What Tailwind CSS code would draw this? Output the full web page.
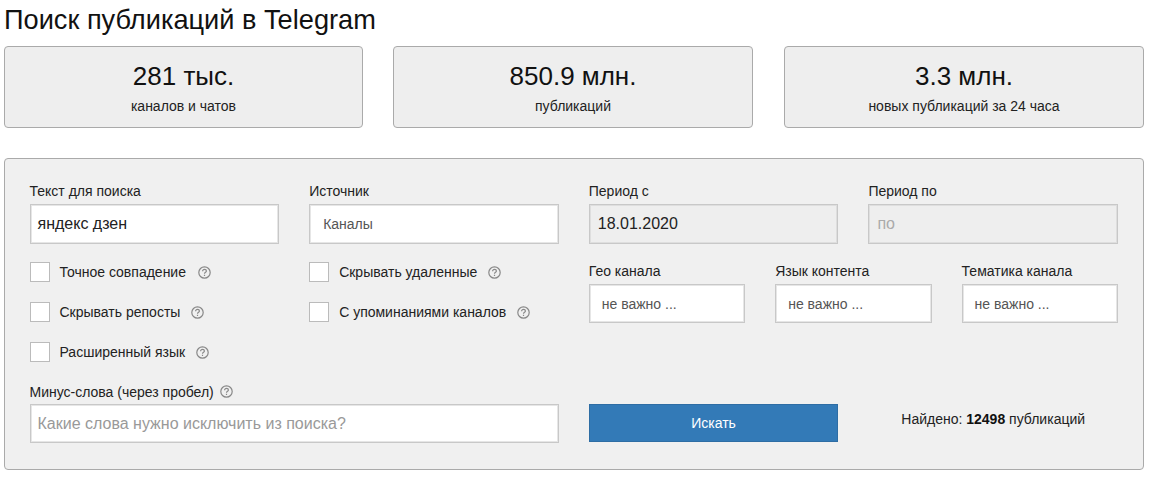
<!DOCTYPE html>
<html lang="ru">
<head>
<meta charset="UTF-8">
<script src="https://cdn.jsdelivr.net/npm/@tailwindcss/browser@4"></script>
<title>Поиск публикаций в Telegram</title>
</head>
<body class="bg-white text-[#111] font-['Liberation_Sans',Arial,sans-serif]">
<div class="pl-[4px] pr-[8px]">
	<h1 class="h-[46px] pt-[3px] text-[27.2px] leading-[34px] font-normal">Поиск публикаций в Telegram</h1>

	<!-- счетчики -->
	<div class="flex">
		<div class="h-[82px] w-[359px] rounded-[4px] border border-[#aaa] bg-[#eee] text-center">
			<div class="pt-[12px] text-[26px] leading-[34px]">281 тыс.</div>
			<div class="pt-[4px] text-[14px] leading-[18px] text-[#222]">каналов и чатов</div>
		</div>
		<div class="ml-[30px] h-[82px] w-[360px] rounded-[4px] border border-[#aaa] bg-[#eee] text-center">
			<div class="pt-[12px] text-[26px] leading-[34px]">850.9 млн.</div>
			<div class="pt-[4px] text-[14px] leading-[18px] text-[#222]">публикаций</div>
		</div>
		<div class="ml-[31px] h-[82px] w-[360px] rounded-[4px] border border-[#aaa] bg-[#eee] text-center">
			<div class="pt-[12px] text-[26px] leading-[34px]">3.3 млн.</div>
			<div class="pt-[4px] text-[14px] leading-[18px] text-[#222]">новых публикаций за 24 часа</div>
		</div>
	</div>

	<!-- форма -->
	<div class="mt-[30px] h-[312px] rounded-[4px] border border-[#aaa] bg-[#f0f0f0] pl-[24.5px] pr-[25px] pt-[23px] text-[14px] leading-[18px] text-[#222]">
		<div class="grid grid-cols-4 gap-x-[30px]">
			<div>
				<div class="h-[22px]">Текст для поиска</div>
				<div class="flex h-[40px] items-center border border-[#c8c8c8] bg-white pl-[7px] text-[16px] text-[#222] shadow-[inset_0_0_0_1px_#e6e6e6]">яндекс дзен</div>
			</div>
			<div>
				<div class="h-[22px]">Источник</div>
				<div class="flex h-[40px] items-center border border-[#c8c8c8] bg-white pl-[13px] text-[#555] shadow-[inset_0_0_0_1px_#e6e6e6]">Каналы</div>
			</div>
			<div>
				<div class="h-[22px]">Период с</div>
				<div class="flex h-[40px] items-center border border-[#c8c8c8] bg-[#eee] pl-[8px] text-[16px] text-[#222] shadow-[inset_0_0_0_1px_#dedede]">18.01.2020</div>
			</div>
			<div>
				<div class="h-[22px]">Период по</div>
				<div class="flex h-[40px] items-center border border-[#c8c8c8] bg-[#eee] pl-[8px] text-[16px] text-[#aaa] shadow-[inset_0_0_0_1px_#dedede]">по</div>
			</div>
		</div>

		<div class="mt-[18px] grid h-[120px] grid-cols-4 gap-x-[30px]">
			<div class="flex flex-col gap-[20px]">
				<div class="flex h-[20px] items-center">
					<span class="h-[20px] w-[20px] border border-[#bbb] bg-white"></span>
					<span class="ml-[10px]">Точное совпадение</span>
					<svg class="ml-[12px] h-[13px] w-[13px]" viewBox="0 0 13 13" fill="none" stroke="#888" stroke-width="1.2"><circle cx="6.5" cy="6.5" r="5.7"/><path d="M4.6 5.2c0-1.2.9-1.8 1.9-1.8s1.9.6 1.9 1.6c0 1.3-1.9 1.4-1.9 2.8M6.5 8.8v1.3"/></svg>
				</div>
				<div class="flex h-[20px] items-center">
					<span class="h-[20px] w-[20px] border border-[#bbb] bg-white"></span>
					<span class="ml-[10px]">Скрывать репосты</span>
					<svg class="ml-[11px] h-[13px] w-[13px]" viewBox="0 0 13 13" fill="none" stroke="#888" stroke-width="1.2"><circle cx="6.5" cy="6.5" r="5.7"/><path d="M4.6 5.2c0-1.2.9-1.8 1.9-1.8s1.9.6 1.9 1.6c0 1.3-1.9 1.4-1.9 2.8M6.5 8.8v1.3"/></svg>
				</div>
				<div class="flex h-[20px] items-center">
					<span class="h-[20px] w-[20px] border border-[#bbb] bg-white"></span>
					<span class="ml-[10px]">Расширенный язык</span>
					<svg class="ml-[11px] h-[13px] w-[13px]" viewBox="0 0 13 13" fill="none" stroke="#888" stroke-width="1.2"><circle cx="6.5" cy="6.5" r="5.7"/><path d="M4.6 5.2c0-1.2.9-1.8 1.9-1.8s1.9.6 1.9 1.6c0 1.3-1.9 1.4-1.9 2.8M6.5 8.8v1.3"/></svg>
				</div>
			</div>
			<div class="flex flex-col gap-[20px]">
				<div class="flex h-[20px] items-center">
					<span class="h-[20px] w-[20px] border border-[#bbb] bg-white"></span>
					<span class="ml-[10px]">Скрывать удаленные</span>
					<svg class="ml-[11px] h-[13px] w-[13px]" viewBox="0 0 13 13" fill="none" stroke="#888" stroke-width="1.2"><circle cx="6.5" cy="6.5" r="5.7"/><path d="M4.6 5.2c0-1.2.9-1.8 1.9-1.8s1.9.6 1.9 1.6c0 1.3-1.9 1.4-1.9 2.8M6.5 8.8v1.3"/></svg>
				</div>
				<div class="flex h-[20px] items-center">
					<span class="h-[20px] w-[20px] border border-[#bbb] bg-white"></span>
					<span class="ml-[10px]">С упоминаниями каналов</span>
					<svg class="ml-[11px] h-[13px] w-[13px]" viewBox="0 0 13 13" fill="none" stroke="#888" stroke-width="1.2"><circle cx="6.5" cy="6.5" r="5.7"/><path d="M4.6 5.2c0-1.2.9-1.8 1.9-1.8s1.9.6 1.9 1.6c0 1.3-1.9 1.4-1.9 2.8M6.5 8.8v1.3"/></svg>
				</div>
			</div>
			<div class="col-span-2 grid grid-cols-3 gap-x-[30px]">
				<div>
					<div class="h-[22px]">Гео канала</div>
					<div class="flex h-[39px] items-center border border-[#c8c8c8] bg-white pl-[12px] text-[#555] shadow-[inset_0_0_0_1px_#e6e6e6]">не важно ...</div>
				</div>
				<div>
					<div class="h-[22px]">Язык контента</div>
					<div class="flex h-[39px] items-center border border-[#c8c8c8] bg-white pl-[12px] text-[#555] shadow-[inset_0_0_0_1px_#e6e6e6]">не важно ...</div>
				</div>
				<div>
					<div class="h-[22px]">Тематика канала</div>
					<div class="flex h-[39px] items-center border border-[#c8c8c8] bg-white pl-[12px] text-[#555] shadow-[inset_0_0_0_1px_#e6e6e6]">не важно ...</div>
				</div>
			</div>
		</div>

		<div class="-mt-[1px] grid grid-cols-4 gap-x-[30px]">
			<div class="col-span-2">
				<div class="flex h-[23px] items-center pb-[2px]">
					<span>Минус-слова (через пробел)</span>
					<svg class="ml-[6px] h-[13px] w-[13px]" viewBox="0 0 13 13" fill="none" stroke="#888" stroke-width="1.2"><circle cx="6.5" cy="6.5" r="5.7"/><path d="M4.6 5.2c0-1.2.9-1.8 1.9-1.8s1.9.6 1.9 1.6c0 1.3-1.9 1.4-1.9 2.8M6.5 8.8v1.3"/></svg>
				</div>
				<div class="flex h-[39px] items-center border border-[#c8c8c8] bg-white pl-[7px] text-[16px] text-[#999] shadow-[inset_0_0_0_1px_#e6e6e6]">Какие слова нужно исключить из поиска?</div>
			</div>
			<div class="pt-[23px]">
				<div class="flex h-[38px] items-center justify-center border border-[#2e6da4] bg-[#337ab7] text-white">Искать</div>
			</div>
			<div class="flex h-[61px] items-center justify-center pt-[14px] text-[#222]">
				<span class="whitespace-nowrap">Найдено: <b class="font-bold text-[#111]">12498</b> публикаций</span>
			</div>
		</div>
	</div>
</div>
</body>
</html>
